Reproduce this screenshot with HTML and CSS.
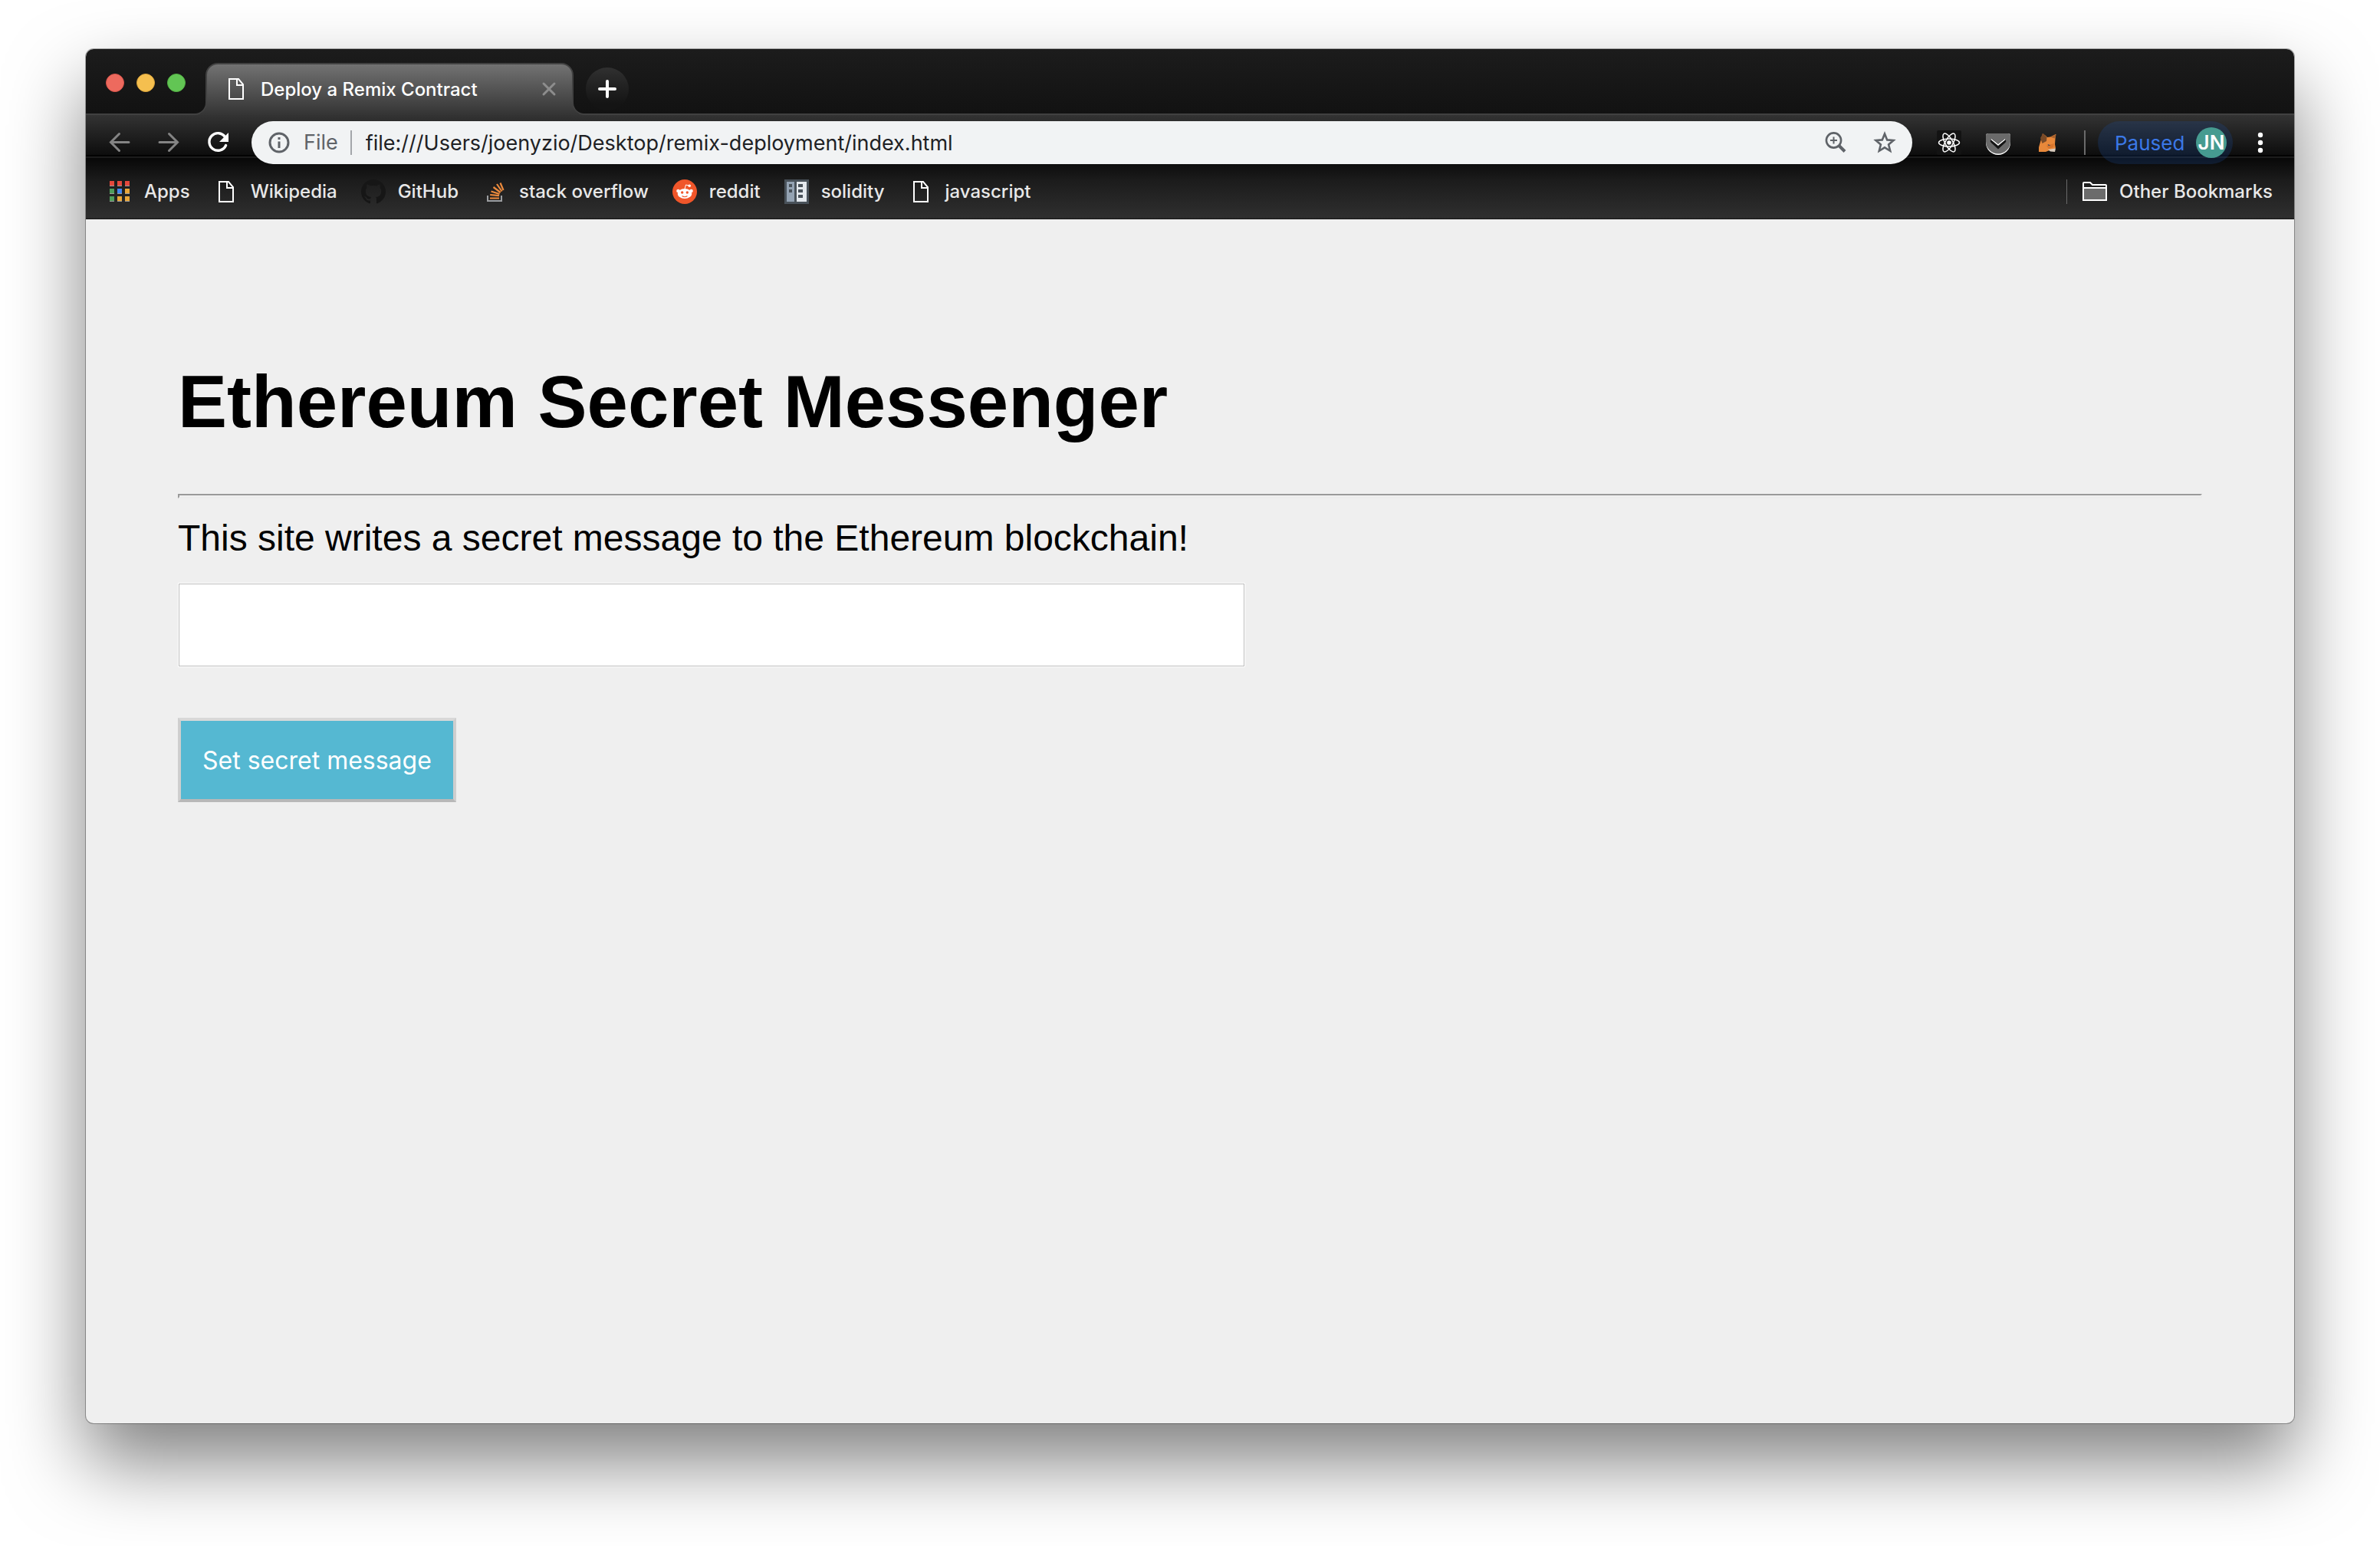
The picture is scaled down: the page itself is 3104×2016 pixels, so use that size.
FILE: index.html
```html
<!DOCTYPE html>
<html lang="en">
<head>
<meta charset="utf-8">
<title>Deploy a Remix Contract</title>
<link rel="stylesheet" href="styles.css">
</head>
<body>
<svg width="0" height="0" class="defs" aria-hidden="true">
  <symbol id="file" viewBox="0 0 32 32"><path d="M7 3h12l6 7v19H7zM17 3v8h8" fill="none" stroke="#fff" stroke-width="2"/></symbol>
</svg>
<div class="window">
  <header>
    <div class="tabstrip">
      <div class="lights"><span class="light red"></span><span class="light yellow"></span><span class="light green"></span></div>
      <div class="tab">
        <svg class="tab-shape" viewBox="0 0 512 68" preserveAspectRatio="none" aria-hidden="true">
          <defs><linearGradient id="tabfill" x1="0" y1="0" x2="0" y2="1"><stop offset="0" stop-color="#737373"/><stop offset="1" stop-color="#343434"/></linearGradient></defs>
          <path d="M2 68a15 15 0 0 0 15-15V16A15 15 0 0 1 32 1H480A15 15 0 0 1 495 16V53A15 15 0 0 0 510 68Z" fill="url(#tabfill)"/>
          <path d="M0 67H2A15 15 0 0 0 17 52V16A15 15 0 0 1 32 1H480A15 15 0 0 1 495 16V52A15 15 0 0 0 510 67H512" fill="none" stroke="#414141" stroke-width="2"/>
        </svg>
        <svg class="icon"><use href="#file"/></svg>
        <span class="tab-title">Deploy a Remix Contract</span>
        <button class="close" aria-label="Close tab"><svg class="icon" viewBox="0 0 32 32"><path d="M9 9l14 14M23 9L9 23" stroke="#8d8d8d" stroke-width="3" stroke-linecap="round"/></svg></button>
      </div>
      <button class="newtab" aria-label="New tab"><svg class="icon" viewBox="0 0 32 32"><path d="M16 6v20M6 16h20" stroke="#fff" stroke-width="4" stroke-linecap="round"/></svg></button>
    </div>
    <div class="bars">
      <div class="toolbar">
        <nav class="nav">
          <button aria-label="Back"><svg class="icon" viewBox="0 0 32 32"><path d="M28 15.500H5M15.500 4.500L4.500 15.500L15.500 26.500" fill="none" stroke="#848484" stroke-width="3" stroke-linecap="round"/></svg></button>
          <button aria-label="Forward"><svg class="icon" viewBox="0 0 32 32"><path d="M4 15.500H27M16.500 4.500L27.500 15.500L16.500 26.500" fill="none" stroke="#848484" stroke-width="3" stroke-linecap="round"/></svg></button>
          <button aria-label="Reload"><svg class="icon" viewBox="0 0 32 32"><path d="M25.500 8.500A11.300 11.300 0 1 0 26.600 19.500" fill="none" stroke="#fff" stroke-width="3.400" stroke-linecap="round"/><path d="M30 3v12H18z" fill="#fff"/></svg></button>
        </nav>
        <div class="omnibox">
          <svg class="icon" viewBox="0 0 32 32"><circle cx="16" cy="16" r="12" fill="none" stroke="#5f6368" stroke-width="3"/><path d="M14.500 9h3v3h-3zM14.500 14.500h3V23h-3z" fill="#5f6368"/></svg>
          <label class="scheme" for="url">File</label>
          <input class="url" id="url" type="text" value="file:///Users/joenyzio/Desktop/remix-deployment/index.html">
          <button aria-label="Zoom"><svg class="icon" viewBox="0 0 32 32"><circle cx="13.500" cy="13" r="9.600" fill="none" stroke="#5f6368" stroke-width="2.600"/><path d="M13.500 8.500v9M9 13h9" stroke="#5f6368" stroke-width="2"/><path d="M20 19.500l8 8" stroke="#5f6368" stroke-width="4"/></svg></button>
          <button aria-label="Bookmark"><svg class="icon" viewBox="0 0 32 32"><path d="M16 4.500L19.200 12.400L27.500 13L21.100 18.500L23.200 26.800L16 22.300L8.800 26.800L10.900 18.500L4.500 13L12.800 12.400Z" fill="none" stroke="#5f6368" stroke-width="2.600"/></svg></button>
        </div>
        <div class="extensions">
          <button aria-label="React tools"><svg class="icon" viewBox="0 0 32 32"><rect width="32" height="32" rx="2" fill="#131313"/><g fill="none" stroke="#fff" stroke-width="1.500"><ellipse cx="16" cy="16" rx="13.500" ry="5"/><ellipse cx="16" cy="16" rx="13.500" ry="5" transform="rotate(60 16 16)"/><ellipse cx="16" cy="16" rx="13.500" ry="5" transform="rotate(120 16 16)"/></g><circle cx="16" cy="16" r="2.800" fill="#fff"/></svg></button>
          <button aria-label="Pocket"><svg class="icon" viewBox="0 0 32 32"><path d="M0 7a3 3 0 0 1 3-3H29a3 3 0 0 1 3 3V16A16 16 0 0 1 0 16Z" fill="#fff"/><path d="M0 7a3 3 0 0 1 3-3H29a3 3 0 0 1 3 3V14.500A16 16 0 0 1 0 14.500Z" fill="#6b6b6b"/><path d="M8 14L16 21.500L24 14" fill="none" stroke="#151515" stroke-width="4.500" stroke-linecap="round"/><path d="M7.500 12L16 19L24.500 12" fill="none" stroke="#fff" stroke-width="1.500" stroke-linecap="round"/></svg></button>
          <button aria-label="MetaMask"><svg class="icon" viewBox="0 0 32 32"><path d="M10 4L14 7L16 9L20 8.500L27 5L26 18L27 23L24 27L19 26L14 28H5L5 22L7 15Z" fill="#e8883a"/><path d="M10.500 4L15.500 9L15 14L9.500 17L7 10Z" fill="#7a4a27"/><path d="M28 5L20 8.500L25.500 10.500Z" fill="#a9622e"/><path d="M15 20L25 17L24 22L18 24Z" fill="#d8752c"/><path d="M16.500 18l4 1.500-3 .5z" fill="#344057"/><path d="M17 25L27 23.500L26 28L20 27.500Z" fill="#d9cbbd"/></svg></button>
        </div>
        <button class="profile">Paused<span class="avatar">JN</span></button>
        <button class="menu" aria-label="Menu"><svg class="icon" viewBox="0 0 32 32" fill="#fff"><circle cx="16" cy="6" r="3.200"/><circle cx="16" cy="16" r="3.200"/><circle cx="16" cy="26" r="3.200"/></svg></button>
      </div>
      <nav class="bookmarks">
        <a href="#"><svg class="icon" viewBox="0 0 32 32"><g fill="#999"><path d="M3 8h6v1H3zM13 8h6v1h-6zM23 8h6v1h-6zM3 18h6v1H3zM13 18h6v1h-6zM23 18h6v1h-6zM3 28h6v1H3zM13 28h6v1h-6zM23 28h6v1h-6z"/></g><path d="M3 2h6v6H3zM13 2h6v6h-6zM23 2h6v6h-6z" fill="#e3483c"/><path d="M3 12h6v6H3zM3 22h6v6H3z" fill="#4f9d5b"/><path d="M13 12h6v6h-6z" fill="#4286f0"/><path d="M23 12h6v6h-6zM13 22h6v6h-6zM23 22h6v6h-6z" fill="#e8a63a"/></svg>Apps</a>
        <a href="#"><svg class="icon"><use href="#file"/></svg>Wikipedia</a>
        <a href="#"><svg class="icon" viewBox="0 0 16 16"><path fill="#161616" d="M8 0C3.580 0 0 3.580 0 8c0 3.540 2.290 6.530 5.470 7.590.4.070.55-.17.55-.38 0-.19-.01-.82-.01-1.490-2.010.37-2.530-.49-2.690-.94-.09-.23-.48-.94-.82-1.130-.28-.15-.68-.52-.01-.53.63-.01 1.080.58 1.230.82.72 1.210 1.870.87 2.330.66.07-.52.28-.87.51-1.070-1.780-.2-3.640-.89-3.640-3.950 0-.87.31-1.590.82-2.150-.08-.2-.36-1.020.08-2.120 0 0 .67-.21 2.200.82.64-.18 1.320-.27 2-.27s1.360.09 2 .27c1.530-1.040 2.200-.82 2.200-.82.44 1.100.16 1.920.08 2.120.51.56.82 1.270.82 2.150 0 3.070-1.870 3.750-3.650 3.950.29.25.54.73.54 1.480 0 1.070-.01 1.930-.01 2.200 0 .21.15.46.55.38A8.010 8.010 0 0 0 16 8c0-4.420-3.580-8-8-8z"/></svg>GitHub</a>
        <a href="#"><svg class="icon" viewBox="0 0 32 32"><path d="M7 21v7h18v-7" fill="none" stroke="#9b9da0" stroke-width="2"/><path d="M10 24.500h12M10.200 20L22 21.200M11.500 15.500L22.500 19M14.500 10L23.700 17M19 6L25.500 15.500M23.500 4.500L27.500 14" fill="none" stroke="#ec8a3c" stroke-width="2.200"/></svg>stack overflow</a>
        <a href="#"><svg class="icon" viewBox="0 0 32 32"><circle cx="16" cy="16" r="16" fill="#f0562a"/><g fill="#fff"><ellipse cx="16" cy="18.500" rx="9.300" ry="6.500"/><circle cx="7.500" cy="15" r="2.300"/><circle cx="24.500" cy="15" r="2.300"/><circle cx="22.200" cy="8.200" r="1.800"/></g><path d="M16 12.500L17.500 7L22 8.200" fill="none" stroke="#fff"/><circle cx="12.700" cy="17" r="1.700" fill="#f0562a"/><circle cx="19.300" cy="17" r="1.700" fill="#f0562a"/><path d="M12.500 21.500q3.500 2.500 7 0" fill="none" stroke="#f0562a" stroke-width="1.200"/></svg>reddit</a>
        <a href="#"><svg class="icon" viewBox="0 0 32 32"><path d="M0 0h32v32H0z" fill="#49525a"/><path d="M3 3h10v26H3z" fill="#94a3b3"/><path d="M16 3h13v26H16z" fill="#e4e9ee"/><path d="M6 6h4v4H6zM6 13h4v4H6zM18 6h6v4h-6zM18 13h6v4h-6zM18 20h6v4h-6z" fill="#49525a"/></svg>solidity</a>
        <a href="#"><svg class="icon"><use href="#file"/></svg>javascript</a>
        <a href="#" class="other"><svg class="icon" viewBox="0 0 32 32"><path d="M1 27V5q0-1 1-1h8l3 3h17q1 0 1 1v19z" fill="none" stroke="#fff" stroke-width="2"/><path d="M2 12h28v14H2z" fill="#6b6b6b"/><path d="M1 11h30" stroke="#fff" stroke-width="2"/></svg>Other Bookmarks</a>
      </nav>
    </div>
  </header>
  <main>
    <h1>Ethereum Secret Messenger</h1>
    <hr>
    <label class="lead" for="message">This site writes a secret message to the Ethereum blockchain!</label>
    <input class="message" id="message" type="text">
    <button class="submit">Set secret message</button>
  </main>
</div>
</body>
</html>
```
FILE: styles.css
```css
* { box-sizing: border-box; }

body {
  margin: 0;
  min-height: 100vh;
  padding: 64px 112px 160px;
  display: flex;
  background: #fff;
  font-family: Inter, "Liberation Sans", sans-serif;
}

button {
  padding: 0;
  border: 0;
  background: none;
  font: inherit;
}

.defs { position: absolute; }

.icon {
  display: block;
  flex: none;
  width: 32px;
  height: 32px;
}

.window {
  flex: 1;
  display: flex;
  flex-direction: column;
  overflow: hidden;
  border-radius: 10px;
  background: #efefef;
  box-shadow: 0 0 0 1px rgba(0, 0, 0, .3), 0 50px 100px rgba(0, 0, 0, .5);
}

/* Tab strip */
.tabstrip {
  display: flex;
  height: 84px;
  padding: 18px 26px 0;
  background: linear-gradient(#1c1c1c, #121212);
}

.lights {
  display: flex;
  gap: 16px;
  width: 114px;
  padding-top: 14px;
}

.light {
  width: 24px;
  height: 24px;
  border-radius: 50%;
}

.red { background: #ed6a5e; border: 1px solid #d9534a; }
.yellow { background: #f5bf4f; border: 1px solid #dba43a; }
.green { background: #62c554; border: 1px solid #52b043; }

.tab {
  position: relative;
  display: flex;
  align-items: center;
  width: 512px;
  height: 68px;
  padding: 0 32px 0 40px;
  z-index: 1;
}

.tab-shape {
  position: absolute;
  inset: 0;
  width: 100%;
  height: 100%;
  z-index: -1;
}

.tab-title {
  flex: 1;
  margin-left: 16px;
  color: #fff;
  font-size: 24px;
  font-weight: 500;
  white-space: nowrap;
}

.newtab {
  display: grid;
  place-items: center;
  width: 56px;
  height: 56px;
  margin-top: 6px;
  border-radius: 50%;
  background: linear-gradient(#303030, #141414 85%);
}

/* Toolbar and bookmarks share one backdrop */
.bars {
  background: linear-gradient(#414141 0 2px, #333 2px, #0d0d0d 54px, #030303 54px 56px, #1c1c1c 56px 58px, #080808 58px, #1c1c1c 88px, #2f2f2f 136px, #1c1c1c 137px);
}

.toolbar {
  display: flex;
  align-items: center;
  height: 76px;
  padding: 0 28px;
}

.nav {
  display: flex;
  gap: 32px;
  margin-right: 28px;
}

.omnibox {
  flex: 1;
  display: flex;
  align-items: center;
  gap: 32px;
  height: 56px;
  padding: 0 20px;
  border-radius: 28px;
  background: #f1f3f4;
  font-size: 27px;
}

.scheme {
  margin-left: -16px;
  padding-right: 16px;
  border-right: 2px solid #a3a6aa;
  color: #5f6368;
  line-height: 32px;
}

.url {
  flex: 1;
  height: 40px;
  margin-left: -14px;
  padding: 0;
  border: 0;
  outline: 0;
  background: none;
  color: #202124;
  font: inherit;
}

.extensions {
  display: flex;
  gap: 32px;
  margin-left: 32px;
}

.profile {
  position: relative;
  display: flex;
  align-items: center;
  justify-content: space-between;
  width: 176px;
  height: 56px;
  margin-left: 50px;
  padding: 0 8px 0 22px;
  border-radius: 28px;
  background: rgba(26, 75, 150, .25);
  color: #3b78e7;
  font-size: 26px;
}

.profile::before {
  content: "";
  position: absolute;
  left: -18px;
  top: 12px;
  width: 2px;
  height: 32px;
  background: #6a6a6a;
}

.avatar {
  width: 40px;
  height: 40px;
  border-radius: 50%;
  background: #469b90;
  color: #fff;
  font-size: 26px;
  font-weight: 600;
  line-height: 40px;
}

.menu { margin: 0 0 0 20px; }

.bookmarks {
  display: flex;
  gap: 31px;
  height: 62px;
  padding: 10px 28px 0;
}

.bookmarks a {
  display: flex;
  gap: 16px;
  height: 32px;
  color: #e8e8e8;
  font-size: 24px;
  font-weight: 500;
  line-height: 32px;
  text-decoration: none;
  white-space: nowrap;
}

.bookmarks .other {
  margin-left: auto;
  padding-left: 20px;
  border-left: 1px solid #6a6a6a;
}

/* Page */
main {
  display: flex;
  flex-direction: column;
  align-items: flex-start;
  padding: 182px 120px;
  color: #000;
  font-family: "Liberation Sans", Arial, sans-serif;
}

h1 {
  margin: 0;
  font-size: 96px;
  line-height: 112px;
}

hr {
  align-self: stretch;
  height: 6px;
  margin: 64px 0 22px;
  border: 2px solid;
  border-color: #9a9a9a #ececec #ececec #9a9a9a;
}

.lead {
  font-size: 48px;
  line-height: 60px;
}

.message {
  width: 1392px;
  max-width: 100%;
  height: 110px;
  margin: 28px 0 66px;
  padding: 0 32px;
  border: 1px solid #fff;
  outline: 1px solid #bdbdbd;
  outline-offset: -2px;
  background: #fff;
  font-size: 32px;
}

.submit {
  height: 110px;
  padding: 0 28px;
  border: 4px solid;
  border-color: #d8d8d8 #cecece #b8b8b8 #cecece;
  background: #55b8d2;
  color: #fff;
  font-family: Inter, sans-serif;
  font-size: 32px;
}
```
